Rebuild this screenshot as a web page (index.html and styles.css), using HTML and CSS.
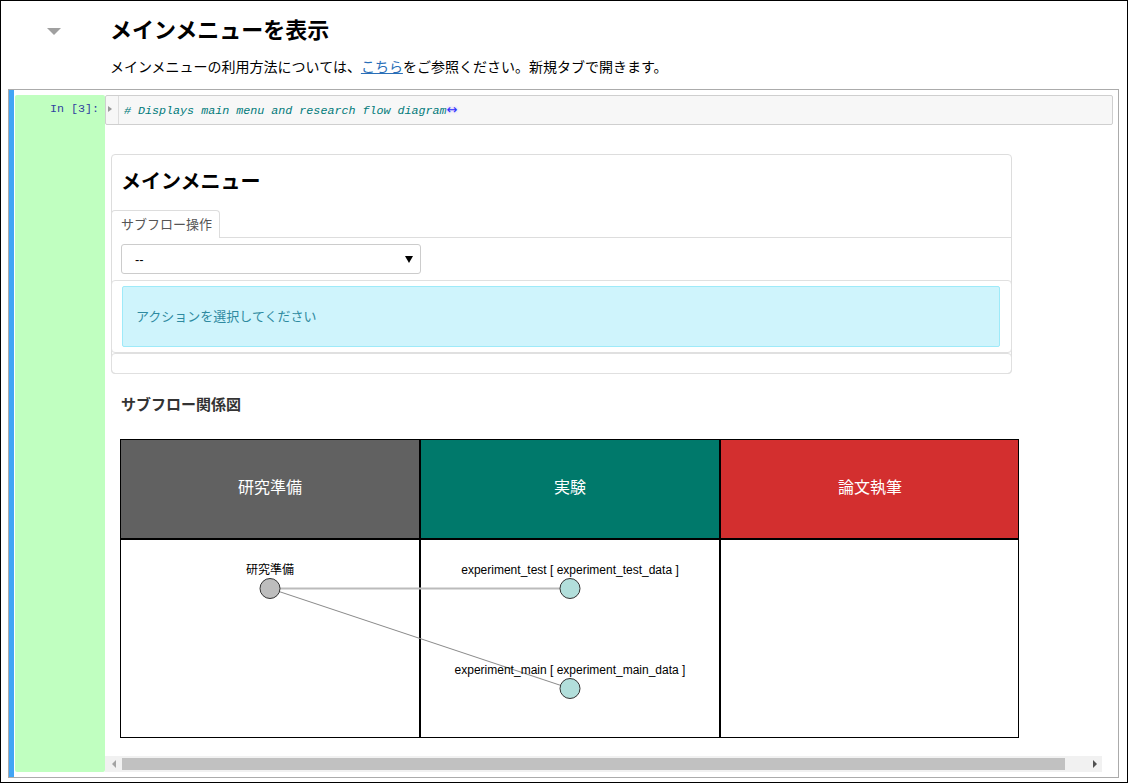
FILE: index.html
```html
<!DOCTYPE html>
<html lang="ja">
<head>
<meta charset="utf-8">
<title>メインメニューを表示</title>
<link rel="stylesheet" href="styles.css">
</head>
<body>
<div class="page">
  <div class="md-header">
    <div class="collapser"><span class="caret"></span></div>
    <div class="md-body">
      <h2 class="md-title">メインメニューを表示</h2>
      <p class="md-text">メインメニューの利用方法については、<a class="md-link" href="#">こちら</a>をご参照ください。新規タブで開きます。</p>
    </div>
  </div>

  <div class="cell">
    <div class="prompt"><span class="prompt-text">In [3]:</span></div>
    <div class="cell-main">
      <div class="code-box">
        <div class="gutter"><span class="fold-caret"></span></div>
        <div class="code-line"><span class="cm-comment"># Displays main menu and research flow diagram</span><span class="fold-marker">↔</span></div>
      </div>
      <div class="output">
        <div class="widget">
          <div class="widget-title">メインメニュー</div>
          <div class="tabs">
            <div class="tab">サブフロー操作</div>
          </div>
          <div class="tab-body">
            <div class="select"><span class="select-value">--</span><span class="select-arrow"></span></div>
          </div>
          <div class="panel">
            <div class="alert">アクションを選択してください</div>
          </div>
          <div class="panel panel-empty"></div>
        </div>

        <div class="diagram-title">サブフロー関係図</div>

        <svg class="diagram" width="900" height="300" viewBox="0 0 900 300" xmlns="http://www.w3.org/2000/svg">
          <rect x="0.5" y="0.5" width="299" height="99" fill="#616161" stroke="#000" stroke-width="1"/>
          <rect x="300.5" y="0.5" width="299" height="99" fill="#00796b" stroke="#000" stroke-width="1"/>
          <rect x="600.5" y="0.5" width="298" height="99" fill="#d32f2f" stroke="#000" stroke-width="1"/>
          <text class="col-label" x="150" y="54" text-anchor="middle">研究準備</text>
          <text class="col-label" x="450" y="54" text-anchor="middle">実験</text>
          <text class="col-label" x="750" y="54" text-anchor="middle">論文執筆</text>
          <rect x="0.5" y="100.5" width="299" height="198" fill="#fff" stroke="#000" stroke-width="1"/>
          <rect x="300.5" y="100.5" width="299" height="198" fill="#fff" stroke="#000" stroke-width="1"/>
          <rect x="600.5" y="100.5" width="298" height="198" fill="#fff" stroke="#000" stroke-width="1"/>
          <line x1="150" y1="149.5" x2="450" y2="149.5" stroke="#bbbbbb" stroke-width="2"/>
          <line x1="150" y1="149.5" x2="450" y2="249.5" stroke="#8a8a8a" stroke-width="1"/>
          <text class="node-label" x="150" y="135" text-anchor="middle">研究準備</text>
          <text class="node-label" x="450" y="135" text-anchor="middle">experiment_test [ experiment_test_data ]</text>
          <text class="node-label" x="450" y="235" text-anchor="middle">experiment_main [ experiment_main_data ]</text>
          <circle cx="150" cy="149.5" r="10" fill="#bdbdbd" stroke="#333" stroke-width="1"/>
          <circle cx="450" cy="149.5" r="10" fill="#b2dfdb" stroke="#333" stroke-width="1"/>
          <circle cx="450" cy="249.5" r="10" fill="#b2dfdb" stroke="#333" stroke-width="1"/>
        </svg>

        <div class="hscroll">
          <div class="hs-btn hs-left"><span class="hs-arrow-left"></span></div>
          <div class="hs-thumb"></div>
          <div class="hs-rest"><span class="hs-arrow-right"></span></div>
        </div>
      </div>
    </div>
  </div>
</div>
</body>
</html>
```

FILE: styles.css
```css
* { box-sizing: border-box; }
html, body {
  margin: 0;
  padding: 0;
  background: #fff;
}
body {
  font-family: "Liberation Sans", "Noto Sans CJK JP", sans-serif;
  color: #000;
}
.page {
  width: 1128px;
  height: 783px;
  border: 1px solid #000;
  overflow: hidden;
  background: #fff;
}

/* markdown header */
.md-header {
  display: flex;
  padding-top: 12px;
  height: 88px;
}
.collapser {
  width: 109px;
  flex: none;
  padding-top: 15px;
  padding-left: 46px;
}
.caret {
  display: block;
  width: 0;
  height: 0;
  border-left: 7px solid transparent;
  border-right: 7px solid transparent;
  border-top: 7px solid #a0a0a0;
}
.md-body { flex: 1; }
.md-title {
  margin: 0;
  font-size: 22px;
  line-height: 30px;
  font-weight: bold;
  font-family: "Noto Sans CJK JP", sans-serif;
}
.md-text {
  margin: 13px 0 0;
  font-size: 14px;
  line-height: 20px;
  font-family: "Noto Sans CJK JP", sans-serif;
}
.md-link {
  color: #2a6fb8;
  text-decoration: underline;
}

/* cell */
.cell {
  margin: 0 8px 0 7px;
  height: 689px;
  border: 1px solid #ababab;
  padding: 5px 5px 5px 6px;
  display: flex;
  background: linear-gradient(to right, #42a5f5 0, #42a5f5 5px, #fff 5px, #fff 100%);
}
.prompt {
  width: 90px;
  flex: none;
  background: #c0ffc0;
  border-radius: 2px;
  text-align: right;
  padding-right: 6px;
}
.prompt-text {
  display: block;
  font-family: "Liberation Mono", monospace;
  font-size: 11.7px;
  line-height: 28px;
  color: #303f9f;
}
.cell-main {
  flex: 1;
  display: flex;
  flex-direction: column;
  min-width: 0;
}
.code-box {
  height: 30px;
  background: #f7f7f7;
  border: 1px solid #cfcfcf;
  border-radius: 2px;
  display: flex;
  flex: none;
}
.gutter {
  width: 13px;
  border-right: 1px solid #dddddd;
  padding: 10px 0 0 2px;
  flex: none;
}
.fold-caret {
  display: block;
  width: 0;
  height: 0;
  border-top: 3px solid transparent;
  border-bottom: 3px solid transparent;
  border-left: 4px solid #999;
}
.code-line {
  padding-left: 5px;
  font-family: "Liberation Mono", monospace;
  font-size: 11.7px;
  line-height: 28px;
  white-space: pre;
}
.cm-comment {
  color: #007a7a;
  font-style: italic;
}
.fold-marker {
  color: #3030ff;
  font-style: normal;
  font-family: "DejaVu Sans", sans-serif;
  font-size: 13px;
  text-shadow: 0 0 3px #c0b0ff;
}

/* output */
.output {
  flex: 1;
  display: flex;
  flex-direction: column;
  padding-top: 29px;
  padding-right: 11px;
}
.widget {
  margin-left: 6px;
  width: 901px;
  border: 1px solid #dddddd;
  border-radius: 4px;
  font-family: "Noto Sans CJK JP", sans-serif;
}
.widget-title {
  padding: 12px 0 0 9px;
  font-size: 20px;
  line-height: 28px;
  font-weight: bold;
  color: #000;
}
.tabs {
  margin-top: 15px;
  margin-left: -1px;
  display: flex;
  border-bottom: 1px solid #dddddd;
}
.tab {
  height: 28px;
  border: 1px solid #dddddd;
  border-bottom: none;
  border-radius: 4px 4px 0 0;
  padding: 0 7px 0 9px;
  font-size: 13px;
  line-height: 26px;
  color: #555;
  margin-bottom: -1px;
  background: #fff;
}
.tab-body {
  padding: 6px 0 6px 9px;
}
.select {
  width: 300px;
  height: 30px;
  border: 1px solid #cccccc;
  border-radius: 3px;
  display: flex;
  align-items: center;
  justify-content: space-between;
  padding: 0 7px 0 13px;
}
.select-value {
  font-family: "Liberation Sans", sans-serif;
  font-size: 13px;
  color: #000;
}
.select-arrow {
  width: 0;
  height: 0;
  border-left: 4px solid transparent;
  border-right: 4px solid transparent;
  border-top: 7px solid #000;
}
.panel {
  margin: 0 -1px;
  border: 1px solid #e0e0e0;
  border-radius: 4px;
  padding: 5px 11px 5px 10px;
}
.panel-empty {
  height: 21px;
  padding: 0;
  margin-bottom: -1px;
}
.alert {
  height: 61px;
  background: #cff4fc;
  border: 1px solid #9eeaf9;
  border-radius: 2px;
  padding-left: 13px;
  padding-bottom: 2px;
  display: flex;
  align-items: center;
  font-size: 13px;
  color: #2e8aa0;
}

.diagram-title {
  margin: 20px 0 0 16px;
  font-family: "Noto Sans CJK JP", sans-serif;
  font-size: 15px;
  font-weight: bold;
  line-height: 20px;
  color: #333;
}
.diagram {
  display: block;
  margin: 25px 0 0 15px;
}
.col-label {
  font-family: "Noto Sans CJK JP", sans-serif;
  font-size: 16px;
  fill: #fff;
}
.node-label {
  font-family: "Liberation Sans", "Noto Sans CJK JP", sans-serif;
  font-size: 12px;
  fill: #000;
}

/* fake horizontal scrollbar */
.hscroll {
  margin-top: auto;
  height: 16px;
  background: #f1f1f1;
  display: flex;
  align-items: center;
}
.hs-btn {
  width: 17px;
  height: 16px;
  flex: none;
  display: flex;
  align-items: center;
  justify-content: center;
}
.hs-arrow-left {
  width: 0;
  height: 0;
  border-top: 4px solid transparent;
  border-bottom: 4px solid transparent;
  border-right: 4px solid #a3a3a3;
}
.hs-thumb {
  width: 943px;
  height: 12px;
  background: #c1c1c1;
  flex: none;
}
.hs-rest {
  flex: 1;
  height: 16px;
  display: flex;
  align-items: center;
  justify-content: flex-end;
  padding-right: 5px;
}
.hs-arrow-right {
  width: 0;
  height: 0;
  border-top: 4px solid transparent;
  border-bottom: 4px solid transparent;
  border-left: 4px solid #505050;
}
```
